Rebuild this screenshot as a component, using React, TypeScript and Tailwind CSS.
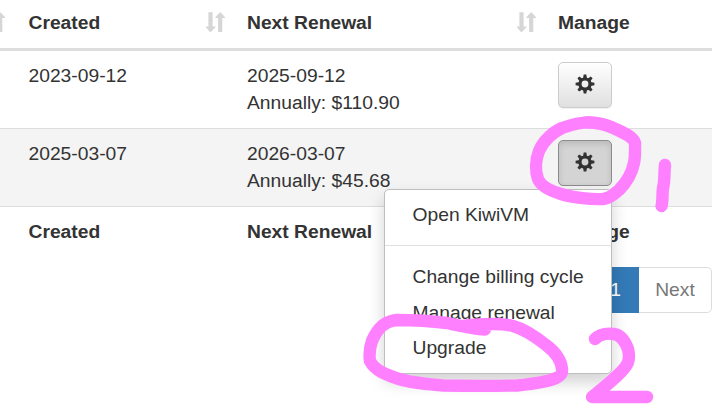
import { clsx } from 'clsx';

interface Service {
  created: string;
  nextRenewal: string;
  price: string;
  menuOpen?: boolean;
}

const services: Service[] = [
  { created: '2023-09-12', nextRenewal: '2025-09-12', price: 'Annually: $110.90' },
  { created: '2025-03-07', nextRenewal: '2026-03-07', price: 'Annually: $45.68', menuOpen: true },
];

const columns = 'grid grid-cols-[18px_218.5px_311px_1fr]';

const SortIcon = () => (
  <svg width="20" height="20" viewBox="0 0 20 20" fill="#d6d6d6" aria-hidden="true">
    <path d="M2.400 .3h4.200v14.200h2.700q.5 .2 .1 .7L5 19.900h-1L-.3 15.200q-.3-.5 .2-.7H2.400z" />
    <path d="M12.100 19.900h4.200V5.900h2.700q.5-.2 .1-.7L14.700 .4h-1L9.400 5.200q-.4 .5 .1 .7h2.600z" />
  </svg>
);

const GearIcon = () => (
  <svg width="20" height="20" viewBox="-10 -10 20 20" fill="#333" aria-hidden="true">
    <circle r="5" fill="none" stroke="#333" strokeWidth="3.2" />
    {[0, 45, 90, 135, 180, 225, 270, 315].map((angle) => (
      <path key={angle} d="M-2 -5.500 L-1.300 -9.400 H1.300 L2 -5.500 Z" transform={`rotate(${angle})`} />
    ))}
  </svg>
);

const ActionsMenu = () => (
  <ul className="absolute top-[49px] right-0 z-10 w-[228px] rounded-[5px] border border-[#bebebe] bg-white bg-clip-padding py-[7px] whitespace-nowrap shadow-[0_8px_16px_rgba(0,0,0,0.18)]">
    <li className="px-[27.5px] py-1">Open KiwiVM</li>
    <li className="mt-[12.5px] mb-[13px] h-px bg-[#e0e0e0]" />
    <li className="px-[27.5px] py-1">Change billing cycle</li>
    <li className="px-[27.5px] py-1">Manage renewal</li>
    <li className="px-[27.5px] py-1">Upgrade</li>
  </ul>
);

const ManageButton = ({ open = false }: { open?: boolean }) => (
  <div className="relative w-[54px]">
    <button
      className={clsx(
        'flex h-[46px] w-[54px] items-center justify-center rounded-[5px] border pb-[3px]',
        open
          ? 'border-[#8c8c8c] bg-[#d4d4d4] shadow-[inset_0_3px_6px_rgba(0,0,0,0.12)]'
          : 'border-[#ccc] bg-linear-to-b from-white to-[#e0e0e0] shadow-[0_1px_1px_rgba(0,0,0,0.06)]',
      )}
      aria-label="Manage"
    >
      <GearIcon />
    </button>
    {open && <ActionsMenu />}
  </div>
);

// Hand-drawn marker strokes over the page
const Marker = () => (
  <svg
    className="pointer-events-none absolute inset-0 z-20"
    width="712"
    height="413"
    fill="none"
    stroke="#ff80ff"
    strokeWidth="12.4"
    strokeLinecap="round"
    strokeLinejoin="round"
    aria-hidden="true"
  >
    <path d="M598 123.500 C587 120.500 573 124 562 128 C553 132 543 141 539 151 C535 161 535.500 172 538 179 C541 187 551 191 561 194 C574 198 592 199.500 603 199 C611 198 614 194 619 190 C626 183 632 173 634 163 C635.500 156 635 149 635 143 C633 136 620 131 611 127 C604 124 597 122 585 122.500" />
    <path d="M665 165 C664 173 665 181 663 188 C662 195 663 202 661.500 206" />
    <path d="M485 329.500 C474 329 461 326 447 323 C431 321 414 320 397 320 C384 321 377 329 372 341 C369 350 369 355 370 361 C375 371 387 375 399 379 C412 383 427 384 443 385.500 C468 386 493 386 517 385.500 C532 384 548 382 556 378 C561 376 562.500 374 562 369 C561 358 554 351 546 345 C536 337 524 329 513 326 C500 323 480 324 463 326" />
    <path d="M595 339 C600 334 607 333 614 334 C621 335 625 341 628 349 C631 361 627 366 620 373 C611 382 602 389 592 397 H647" />
  </svg>
);

export default function App() {
  return (
    <div className="relative h-[413px] w-[712px] overflow-hidden bg-white font-['Liberation_Sans',Arial,sans-serif] text-[19.25px] leading-[27.5px] text-[#333]">
      <div className={clsx(columns, 'h-[51px] border-b-3 border-[#ddd] pt-[8.500px] font-bold')}>
        <div className="flex justify-end overflow-hidden pt-[3.500px] pr-3">
          <div className="shrink-0"><SortIcon /></div>
        </div>
        <div className="flex justify-between pr-[11px] pl-[10.500px]">
          <span>Created</span>
          <span className="pt-[3.500px]"><SortIcon /></span>
        </div>
        <div className="flex justify-between pr-[11px] pl-[10.500px]">
          <span>Next Renewal</span>
          <span className="pt-[3.500px]"><SortIcon /></span>
        </div>
        <div className="pl-[10.500px]">Manage</div>
      </div>

      {services.map((service) => (
        <div
          key={service.created}
          className={clsx(columns, 'h-[78px] border-b border-[#ddd] pt-[11px]', service.menuOpen && 'bg-[#f4f4f4]')}
        >
          <div />
          <div className="pl-[10.500px]">{service.created}</div>
          <div className="pl-[10.500px] leading-[27px]">
            <div>{service.nextRenewal}</div>
            <div>{service.price}</div>
          </div>
          <div className="pl-[10.500px]">
            <ManageButton open={service.menuOpen} />
          </div>
        </div>
      ))}

      <div className={clsx(columns, 'h-[60px] pt-[11px] font-bold')}>
        <div />
        <div className="pl-[10.500px]">Created</div>
        <div className="pl-[10.500px]">Next Renewal</div>
        <div className="pl-[10.500px]">Manage</div>
      </div>

      <div className="flex justify-end">
        <span className="flex h-[46px] w-[47px] items-center justify-center bg-[#337ab7] text-white">1</span>
        <span className="flex h-[46px] w-[73px] items-center justify-center rounded-r-[5px] border border-l-0 border-[#ddd] text-[#777]">
          Next
        </span>
      </div>

      <Marker />
    </div>
  );
}
